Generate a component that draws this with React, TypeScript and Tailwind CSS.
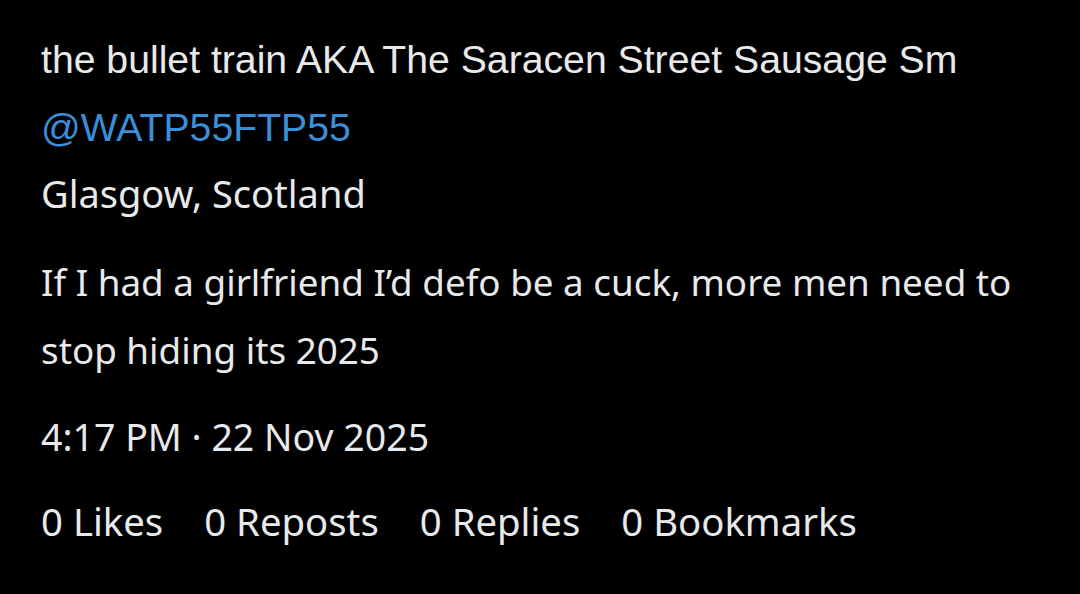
export default function App() {
  const stats = [
    { n: 0, label: "Likes" },
    { n: 0, label: "Reposts" },
    { n: 0, label: "Replies" },
    { n: 0, label: "Bookmarks" },
  ];

  return (
    <div className="w-[1080px] h-[594px] bg-black text-[#e7e9ea] overflow-hidden pl-[41px] pt-[28px]">
      <div className="font-['Liberation_Sans',Arial,sans-serif] text-[39.2px]">
        <div className="leading-[64px]">the bullet train AKA The Saracen Street Sausage Sm</div>
        <div className="leading-[72px] text-[#3b8fd9]">@WATP55FTP55</div>
      </div>
      <div className="font-['Noto_Sans',sans-serif]">
        <div className="text-[38px] leading-[58px]">Glasgow, Scotland</div>
        <p className="mt-[26px] text-[36.8px] leading-[68px] w-[1010px]">
          If I had a girlfriend I’d defo be a cuck, more men need to stop hiding its 2025
        </p>
        <div className="mt-[24px] text-[37.5px] leading-[58px]">4:17 PM · 22 Nov 2025</div>
        <div className="mt-[26px] flex gap-[41px] text-[38.3px] leading-[58px]">
          {stats.map((s) => (
            <span key={s.label}>
              {s.n} {s.label}
            </span>
          ))}
        </div>
      </div>
    </div>
  );
}
